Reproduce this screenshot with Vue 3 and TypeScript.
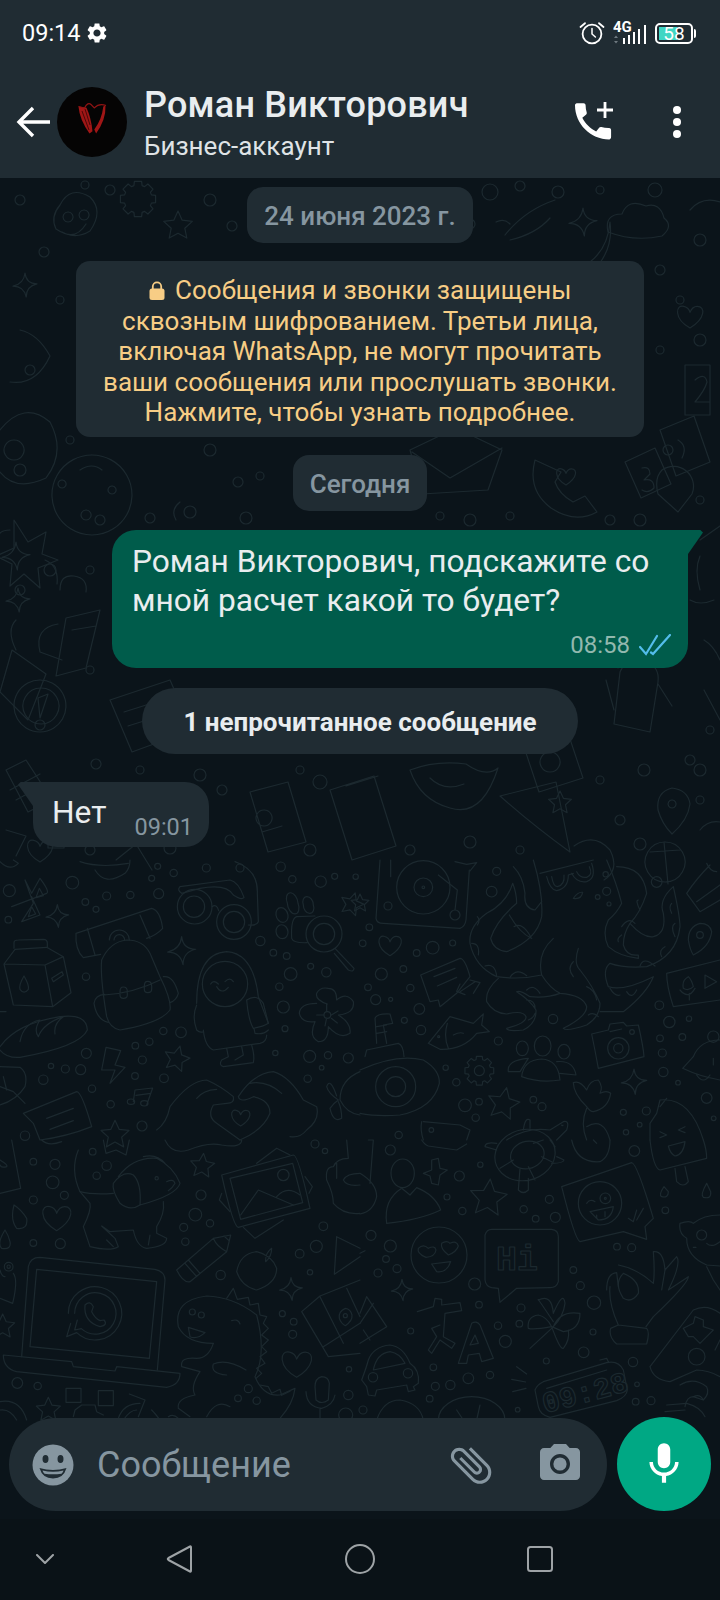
<template>
  <div class="phone">
    <header class="top">
      <div class="status">
        <span class="clock">09:14</span>
        <svg class="gear" viewBox="0 0 24 24" width="24" height="24">
          <path fill="#fff" d="M19.14 12.94c.04-.3.06-.61.06-.94 0-.32-.02-.64-.07-.94l2.03-1.58c.18-.14.23-.41.12-.61l-1.92-3.32c-.12-.22-.37-.29-.59-.22l-2.39.96c-.5-.38-1.03-.7-1.62-.94l-.36-2.54c-.04-.24-.24-.41-.48-.41h-3.84c-.24 0-.43.17-.47.41l-.36 2.54c-.59.24-1.13.57-1.62.94l-2.39-.96c-.22-.08-.47 0-.59.22L2.74 8.87c-.12.21-.08.47.12.61l2.03 1.58c-.05.3-.09.63-.09.94s.02.64.07.94l-2.03 1.58c-.18.14-.23.41-.12.61l1.92 3.32c.12.22.37.29.59.22l2.39-.96c.5.38 1.03.7 1.62.94l.36 2.54c.05.24.24.41.48.41h3.84c.24 0 .44-.17.47-.41l.36-2.54c.59-.24 1.13-.56 1.62-.94l2.39.96c.22.08.47 0 .59-.22l1.92-3.32c.12-.22.07-.47-.12-.61l-2.01-1.58zM12 15.6c-1.98 0-3.6-1.62-3.6-3.6s1.62-3.6 3.6-3.6 3.6 1.62 3.6 3.6-1.62 3.6-3.6 3.6z" />
        </svg>
        <div class="status-right">
          <svg viewBox="0 0 26 24" width="26" height="24" fill="none" stroke="#fff" stroke-width="1.8" stroke-linecap="round">
            <circle cx="13" cy="13" r="9.4" />
            <path d="M13 7.5V13l3.4 3" stroke-width="1.5" />
            <path d="M1.5 6 6 2.2M24.500 6 20 2.200" />
          </svg>
          <svg class="signal" viewBox="0 0 34 26" width="34" height="26">
            <text x="0" y="13" class="net">4G</text>
            <path d="M3 16.500l2 2.500h-4zM3 24.500l2-2.500h-4z" fill="#6f7a80" />
            <rect x="10" y="19" width="2" height="6" fill="#fff" />
            <rect x="15" y="16" width="2" height="9" fill="#fff" />
            <rect x="20" y="13" width="2" height="12" fill="#fff" />
            <rect x="25" y="10" width="2" height="15" fill="#fff" />
            <rect x="31" y="6" width="2" height="19" fill="#fff" />
          </svg>
          <div class="battery">
            <div class="battery-fill" :style="{ width: batteryLevel * 0.31 + 'px' }"></div>
            <span class="battery-num">{{ batteryLevel }}</span>
          </div>
        </div>
      </div>
      <div class="appbar">
        <svg class="back" viewBox="0 0 34 32" width="34" height="32" fill="none" stroke="#fff" stroke-width="3.400">
          <path d="M34 16H3M17 2 3 16l14 14" />
        </svg>
        <div class="avatar">
          <svg viewBox="0 0 70 70" width="70" height="70">
            <path d="M21.500 19.500q1 13 11 27l3-2.300q-1.500-14-6-23.500z" fill="#a01616" />
            <path d="M25 24l7 19M28 22l5 16" stroke="#4a0808" stroke-width="1" fill="none" />
            <path d="M21.500 19.500l6 1.500q3.500-6.500 6.500-3.500l3.300 3.300q5-5 11.700-2.300" fill="none" stroke="#8e1414" stroke-width="1.200" />
            <path d="M48.500 18.500q.6 14-9.400 28l-1.800-4q7.500-10 9-23z" fill="#a01616" />
          </svg>
        </div>
        <div class="who">
          <div class="name">Роман Викторович</div>
          <div class="kind">Бизнес-аккаунт</div>
        </div>
        <svg class="call" viewBox="0 0 40 40" width="40" height="40">
          <path fill="#fff" transform="translate(0 2) scale(.9)" d="M37.200 26.800c-2.800 0-5.400-.45-7.900-1.250-.78-.27-1.660-.07-2.260.54l-3.500 4.400c-6.300-3-12.200-8.700-15.400-15.200l4.350-3.700c.6-.62.78-1.500.54-2.280-.83-2.480-1.250-5.130-1.250-7.880 0-1.200-1-2.200-2.200-2.200H2.700C1.500-.770 0-.24 0 1.430 0 22.200 17.300 39.400 37.900 39.400c1.600 0 2.200-1.400 2.200-2.630V29c0-1.200-1-2.200-2.200-2.200z" />
          <path d="M22 8h16M30 0v16" stroke="#fff" stroke-width="2.800" />
        </svg>
        <div class="dots">
          <span></span>
          <span></span>
          <span></span>
        </div>
      </div>
    </header>

    <main class="chat">
      <svg class="wallpaper" viewBox="0 178 720 1341" width="720" height="1341" fill="none" stroke="#1c292f" stroke-linecap="round" stroke-linejoin="round">
        <g v-for="(tile, i) in tiles" :key="i" :transform="`translate(${tile.x} ${tile.y}) scale(${tile.s})`" :stroke-width="1.2 / tile.s">
          <path v-for="(d, j) in tile.paths" :key="j" :d="d" />
          <circle v-for="(c, j) in tile.dots" :key="'c' + j" :cx="c[0]" :cy="c[1]" :r="c[2]" />
          <text v-for="(t, j) in tile.words" :key="'t' + j" :x="t.x" :y="t.y" :font-size="t.size" :transform="t.rot ? `rotate(${t.rot} ${t.x} ${t.y})` : undefined" class="doodle-word">{{ t.text }}</text>
        </g>
      </svg>

      <div class="pill">24 июня 2023 г.</div>
      <div class="notice">
        <svg class="lock" viewBox="0 0 16 20" width="16" height="20">
          <path d="M3.800 9V5.500a4.200 4.200 0 0 1 8.400 0V9" fill="none" stroke="#f7cd85" stroke-width="1.800" />
          <rect x="0.500" y="7.500" width="15" height="11.500" rx="2.500" fill="#f7cd85" />
        </svg>
        Сообщения и звонки защищены сквозным шифрованием. Третьи лица, включая WhatsApp, не могут прочитать ваши сообщения или прослушать звонки. Нажмите, чтобы узнать подробнее.
      </div>
      <div class="pill pill-today">Сегодня</div>

      <div class="bubble out">
        <div class="msg">Роман Викторович, подскажите со мной расчет какой то будет?</div>
        <div class="meta">
          <span>08:58</span>
          <svg viewBox="0 0 32 22" width="32" height="22" fill="none" stroke="#53bdeb" stroke-width="2.200" stroke-linecap="round">
            <path d="M1 13l6 7L18 2M12 18.500l2 1.500L31 1" />
          </svg>
        </div>
      </div>

      <div class="unread">1 непрочитанное сообщение</div>

      <div class="bubble in">
        <span class="msg">Нет</span>
        <span class="in-time">09:01</span>
      </div>

      <div class="composer">
        <div class="field">
          <svg class="smile" viewBox="0 0 42 42" width="42" height="42">
            <circle cx="21" cy="21" r="20.500" fill="#8696a0" />
            <ellipse cx="13.500" cy="15" rx="3" ry="4" fill="#202c33" />
            <ellipse cx="28.500" cy="15" rx="3" ry="4" fill="#202c33" />
            <path d="M7.500 24q13.500 4 27 0-3 10.500-13.500 10.500T7.500 24z" fill="#202c33" />
            <path d="M10.500 26.500q10.500 2.500 21 0-.5 2-2 3.200-8.500 1.300-17 0-1.500-1.200-2-3.200z" fill="#8696a0" />
          </svg>
          <span class="placeholder">Сообщение</span>
          <svg class="clip" viewBox="0 0 24 24" width="50" height="50">
            <path fill="#8696a0" transform="rotate(-45 12 12)" d="M16.500 6v11.500c0 2.210-1.790 4-4 4s-4-1.790-4-4V5c0-1.380 1.120-2.500 2.500-2.500s2.500 1.120 2.500 2.500v10.500c0 .55-.45 1-1 1s-1-.45-1-1V6H10v9.500c0 1.380 1.120 2.500 2.500 2.500s2.500-1.120 2.500-2.500V5c0-2.210-1.790-4-4-4S7 2.790 7 5v12.500c0 3.040 2.460 5.500 5.500 5.500s5.500-2.460 5.500-5.500V6h-1.500z" />
          </svg>
          <svg class="cam" viewBox="0 0 24 24" width="48" height="48">
            <path fill="#8696a0" d="M9 2 7.170 4H4c-1.100 0-2 .9-2 2v12c0 1.100.9 2 2 2h16c1.100 0 2-.9 2-2V6c0-1.100-.9-2-2-2h-3.170L15 2H9zm3 15c-2.760 0-5-2.240-5-5s2.240-5 5-5 5 2.240 5 5-2.240 5-5 5z" />
            <circle cx="12" cy="12" r="3.300" fill="#8696a0" />
          </svg>
        </div>
        <div class="mic">
          <svg viewBox="0 0 24 24" width="50" height="50">
            <path fill="#fff" d="M12 14c1.660 0 3-1.340 3-3V5c0-1.660-1.340-3-3-3S9 3.340 9 5v6c0 1.660 1.340 3 3 3zm5.300-3c0 3-2.540 5.100-5.300 5.100S6.700 14 6.700 11H5c0 3.410 2.720 6.230 6 6.720V21h2v-3.280c3.280-.48 6-3.300 6-6.720h-1.700z" />
          </svg>
        </div>
      </div>
    </main>

    <nav class="navbar">
      <svg viewBox="0 0 18 10" width="18" height="10"><path d="M1 1l8 8 8-8" /></svg>
      <svg viewBox="0 0 26 30" width="26" height="30"><path d="M24 2.500Q25 2 25 3.500v23q0 1.500-1 1L2.500 16q-1.500-1 0-2z" /></svg>
      <svg viewBox="0 0 30 30" width="30" height="30"><circle cx="15" cy="15" r="14" /></svg>
      <svg viewBox="0 0 26 26" width="26" height="26"><rect x="1" y="1" width="24" height="24" rx="2.500" /></svg>
    </nav>
  </div>
</template>

<script setup lang="ts">
import { ref } from 'vue'

interface Word {
  x: number
  y: number
  size: number
  rot?: number
  text: string
}

interface Tile {
  x: number
  y: number
  s: number
  paths: string[]
  dots: number[][]
  words?: Word[]
}

const batteryLevel = ref(58)

const star = (cx: number, cy: number, r: number, rot = 0) => {
  let d = ''
  for (let i = 0; i < 10; i++) {
    const len = i % 2 ? r * 0.48 : r
    const a = rot + (Math.PI * i) / 5 - Math.PI / 2
    d += `${i ? 'L' : 'M'}${(cx + len * Math.cos(a)).toFixed(1)} ${(cy + len * Math.sin(a)).toFixed(1)}`
  }
  return d + 'Z'
}

const sparkle = (cx: number, cy: number, r: number) =>
  `M${cx} ${cy - r}Q${cx + r * 0.1} ${cy - r * 0.1} ${cx + r} ${cy - r * 0.1}Q${cx + r * 0.1} ${cy + r * 0.1} ${cx + r * 0.1} ${cy + r}Q${cx - r * 0.1} ${cy + r * 0.1} ${cx - r} ${cy + r * 0.1}Q${cx - r * 0.1} ${cy - r * 0.1} ${cx} ${cy - r}Z`

const heart = (cx: number, cy: number, s: number) =>
  `M${cx} ${cy + s}C${cx - s * 1.4} ${cy + s * 0.2} ${cx - s * 1.2} ${cy - s} ${cx - s * 0.5} ${cy - s * 0.8}Q${cx - s * 0.1} ${cy - s * 0.7} ${cx} ${cy - s * 0.3}Q${cx + s * 0.2} ${cy - s * 0.8} ${cx + s * 0.6} ${cy - s * 0.8}C${cx + s * 1.3} ${cy - s * 0.8} ${cx + s * 1.3} ${cy + s * 0.2} ${cx} ${cy + s}Z`

const gear = (cx: number, cy: number, r: number) => {
  let d = ''
  for (let i = 0; i < 8; i++) {
    const a = (Math.PI * i) / 4
    const pts = [
      [r * 0.78, a - 0.3],
      [r, a - 0.2],
      [r, a + 0.2],
      [r * 0.78, a + 0.3],
    ]
    for (const [len, ang] of pts) {
      d += `${d ? 'L' : 'M'}${(cx + len * Math.cos(ang)).toFixed(1)} ${(cy + len * Math.sin(ang)).toFixed(1)}`
    }
  }
  return d + 'Z'
}

// page-space doodles above y=860, only the strips round the cards really show
const topTile: Tile = {
  x: 0,
  y: 0,
  s: 1,
  paths: [
    gear(138, 199, 18),
    star(178, 226, 15),
    'M60 205q10-20 30-8 14 14 0 34-16 10-34-2-6-12 4-24zM68 212a5 5 0 1 0 .1 0M84 210a5 5 0 1 0 .1 0M62 232q14 8 24-8',
    'M505 235q20-25 50-35M510 240q26-6 40-22M496 222q8-4 14 2',
    'M608 232q-4-18 14-18 6-16 24-8 14-4 18 12 10 8-2 18-28 6-54-4z',
    sparkle(583, 222, 14),
    'M590 262q18-14 20-40 4 30-20 52',
    sparkle(25, 285, 12),
    'M20 330q18 4 30 26-14 30-40 26',
    'M0 430q24-30 50-8 16 30-4 56-30 14-46-6M14 440a10 10 0 1 0 .1 0',
    'M685 365h25v50h-25zM695 380q10-8 12 2-2 8-12 20h14',
    'M660 430l34-14 16 46-34 14zM678 440q10 6 4 18',
    heart(690, 316, 12),
    'M662 470a20 20 0 0 1 30 24l-14 18-20-18q-4-16 4-24z',
    'M92 455a40 40 0 1 1-.1 0M80 470q12-8 22 0M86 510a5 5 0 1 0 .1 0M112 486a4 4 0 1 0 .1 0M62 480a4 4 0 1 0 .1 0',
    'M410 450l46-22 46 22-14 40-66 4zM412 452l38 26 52-30',
    'M535 460q-8 30 16 48 24 16 46 4l-12-16-12 6q-14-8-18-20l6-10z',
    heart(566, 476, 9),
    'M625 462l30-14 16 36-30 14zM642 468q8-2 8 6-4 4-6 6 10-2 10 8-6 6-12 2',
    'M14 520l14 22 18-10-4 22 16 6-20 8 2 20-16-14-14 12 2-22-16-8 18-8z',
    'M10 530q-14 0-14 14M45 560q14 6 12 24',
    sparkle(16, 556, 14),
    'M66 618l34-8-14 58-30 8z M72 630l24-4',
    'M60 590q0-16 14-14 14 2 12 16M62 660l-22-8q-6-24 18-28',
    'M16 620q-10 10 0 30',
    sparkle(18, 600, 12),
    'M12 650l34 24-18 46-28-28z',
    'M40 680a26 26 0 1 1-.1 0M41 688a18 18 0 1 1-.1 0M48 694l-8 24-2-20 10-4z',
    'M6 770l20-10 26 40-24 12zM10 790l30-16M16 800l22-12',
    'M110 700l60-20 22 50-60 22zM124 712l38-12M128 726l38-12',
    'M700 556q-6 14 0 34M690 600q10 6 24 0',
    'M620 672q6-14 24-12 16 6 14 22l-8 50-36-8z M606 680l8 30M658 684l14 22M640 660l6-14M618 668l-8-12',
    'M330 790l44-14 22 70-44 14zM346 786l32-10',
    'M250 792l38-10 18 60-38 10zM264 810a8 8 0 1 0 .1 0M262 832l20-6',
    'M410 770q26-10 56-6 20 14 32 4-16 50-48 40-30-8-40-38zM430 778q14 14 34 6',
    'M500 796q34 30 70 56l-14-70z',
    star(560, 803, 12),
    'M525 750l44-14 14 42-44 14zM550 752a10 10 0 1 0 .1 0',
    'M672 788q-16 4-14 22 4 14 14 24 16-14 18-30-2-14-18-16zM672 800a4 4 0 1 0 .1 0',
    'M665 842a20 20 0 1 0 .1 0M650 852l30-2M664 842l4 42',
    'M574 846q20-14 36 4 10 20-6 30',
    heart(40, 850, 12),
    'M690 210q12-14 30-8M700 540l20-14M700 830q8-10 20-8M704 690l16 30M704 640q10 6 16 20',
    'M48 808h16v40h-16zM6 830l20 6-10 20',
    'M116 860l20-16 16 26',
    'M120 572q-6 14 6 20M176 520q-6-10 4-18',
  ],
  dots: [
    [110, 190, 5], [85, 185, 4], [210, 200, 6], [232, 226, 5], [490, 192, 8], [470, 224, 5], [520, 186, 5], [558, 192, 6], [600, 190, 4], [655, 190, 7], [700, 240, 6],
    [20, 200, 5], [44, 252, 5], [30, 370, 5], [60, 300, 4], [20, 470, 6], [70, 440, 4], [660, 270, 5], [680, 300, 4], [700, 340, 6], [660, 350, 4], [668, 450, 5], [700, 500, 4],
    [210, 450, 6], [238, 482, 5], [260, 476, 4], [246, 518, 6], [190, 512, 6], [150, 518, 5], [100, 520, 5], [470, 520, 6], [510, 516, 4], [440, 516, 4], [610, 520, 5], [640, 520, 6],
    [20, 590, 5], [50, 570, 6], [90, 570, 4], [40, 725, 5], [90, 670, 4], [96, 764, 5], [140, 770, 4], [200, 775, 6], [222, 790, 5], [300, 770, 4], [320, 782, 7], [600, 780, 4], [644, 770, 6], [690, 760, 5], [710, 730, 4], [700, 770, 6],
    [230, 840, 5], [192, 826, 4], [240, 868, 4], [310, 850, 6], [410, 850, 5], [470, 842, 6], [520, 850, 4], [620, 820, 5], [640, 844, 6], [700, 800, 4], [90, 850, 5], [120, 842, 4], [170, 848, 6],
  ],
}

const tileA: Tile = {
  x: 0,
  y: 860,
  s: 1 / 3,
  paths: [
    'M35 140L140 100Q150 95 120 55L95 100L75 60L100 130L65 185L120 165L95 110',
    'M118 85l12 22-22 6zM95 140l12 22-22 8z',
    sparkle(172, 168, 34),
    'M0 5q30 30 55 5L40 0',
    'M240 5q60 20 145 5M285 30q30 50 90 10 15-15 15-40',
    'M540 80L690 60Q715 65 732 112Q725 122 700 105Q680 70 600 85L545 100Q530 90 540 80',
    'M705 5Q775 30 772 100L775 185Q770 198 745 195',
    'M532 140a52 52 0 1 0 104 0a52 52 0 1 0-104 0M550 140a32 32 0 1 0 64 0a32 32 0 1 0-64 0',
    'M650 186a52 52 0 1 0 104 0a52 52 0 1 0-104 0M670 186a32 32 0 1 0 64 0a32 32 0 1 0-64 0M636 140q14-10 20 12',
    'M918 222a54 54 0 1 0 108 0a54 54 0 1 0-108 0M940 222a32 32 0 1 0 64 0a32 32 0 1 0-64 0M1005 265L1062 325Q1062 338 1045 330L1003 280',
    'M862 130a16 26-20 1 0 32 0a16 26-20 1 0-32 0M910 135a15 21-20 1 0 30 0a15 21-20 1 0-30 0M828 165a17 22-20 1 0 36 0a17 22-20 1 0-36 0M828 215a17 20-15 1 0 36 0a17 20-15 1 0-36 0',
    'M945 168L890 170Q872 175 875 235Q880 250 922 248',
    star(1055, 133, 36, 0.3),
    'M228 220L455 145Q480 150 488 205Q470 225 440 235M228 220Q225 270 250 293L302 283M262 205L285 285M420 165L450 235',
    'M328 240a30 30 0 0 1 60 0M342 240a16 16 0 0 1 32 0',
    'M305 300Q330 245 380 240Q430 240 450 280L480 350Q515 420 510 450Q480 490 360 510Q330 505 320 470Q300 350 305 300Z',
    'M312 405Q400 400 480 360M360 395q0-14 10-14 12 0 12 14v10q0 10-12 10-10 0-10-10zM433 378q0-14 10-14 12 0 12 14v10q0 10-12 10-10 0-10-10z',
    'M315 403Q285 405 282 430Q290 480 325 487M490 350Q520 345 535 400Q530 420 510 428',
    sparkle(545, 272, 42),
    'M12 312L45 268L140 262L190 290L213 398L158 440L40 435ZM12 312L135 315L190 290M135 315L158 440',
    'M42 265L42 248Q42 240 55 240L130 238Q142 238 142 250L142 262',
    'M72 348Q56 375 60 388Q72 405 85 388Q88 375 72 348ZM155 355L186 335L190 345L160 365Z',
    'M590 430Q590 280 680 275Q760 280 775 410L805 490M607 372a68 68 0 1 0 136 0a68 68 0 1 0-136 0',
    'M632 372Q640 358 655 372M675 365Q690 350 700 365M650 380Q665 405 685 382',
    'M740 420Q770 400 790 430L805 490Q790 500 760 505Q745 480 740 420ZM762 505L765 520Q790 525 805 510M590 435Q575 470 590 510Q600 520 610 515',
    'M610 510Q615 560 640 570L780 550Q800 545 800 525',
    'M680 565L685 590L665 600Q655 615 670 620L760 608Q765 590 755 555M725 560L730 585L705 600',
    'M982 432Q945 420 950 400Q960 380 985 385Q1010 385 1010 420Q1040 395 1060 425Q1065 460 1015 465Q1055 490 1050 520Q1020 540 985 500Q985 545 955 545Q925 530 945 485Q905 490 898 460Q900 430 950 430',
    'M972 465a10 10 0 1 0 20 0a10 10 0 1 0-20 0M950 465h20M994 465l20-12M980 432v20M975 498l4-20M994 475l18 14',
    'M0 560Q50 490 180 470Q260 460 262 510Q240 560 60 592Q20 595 0 570',
    'M60 545Q70 490 120 480Q100 510 115 530Q130 490 190 470Q160 490 165 522',
    'M318 562L362 572L345 615L375 622L330 670L345 630L305 630Z',
    star(530, 597, 40, 0.25),
    'M405 690L458 684L440 735M405 690L400 725M382 725a11 8 0 1 0 22 0a11 8 0 1 0-22 0M422 730a11 8 0 1 0 22 0a11 8 0 1 0-22 0M408 706l44-6',
    'M470 810Q500 790 510 740Q570 660 620 660Q665 680 700 710Q705 730 680 730L640 735Q620 770 650 790L720 840M590 715Q610 690 650 688',
    'M715 710Q760 640 820 635Q870 650 910 720L950 740Q960 780 920 810Q900 835 870 830M715 710Q720 730 760 710Q810 720 810 760Q790 810 720 840M845 700Q800 660 750 670',
    heart(722, 772, 26),
    'M1080 635Q1020 660 1020 720Q1040 760 1080 765M1010 708Q990 650 980 680Q985 700 1015 720Q1000 730 990 745Q1000 790 1025 775Q1025 745 1015 725',
    'M0 620L60 622Q85 640 75 680Q50 720 0 735M0 680L40 695L75 730M10 650l10 40',
    'M70 760L230 695Q245 695 275 800Q200 830 120 840L100 790ZM140 775L220 745M150 808L220 782',
    star(345, 825, 44),
    'M0 455h18',
  ],
  dots: [
    [28, 92, 18], [217, 68, 19], [256, 126, 10], [288, 148, 9], [320, 108, 12], [391, 105, 11], [476, 101, 15], [455, 55, 9], [521, 39, 11], [473, 19, 9], [619, 24, 12], [25, 179, 10],
    [842, 20, 14], [877, 58, 11], [962, 65, 17], [1004, 49, 9], [1067, 50, 8], [781, 243, 14], [820, 278, 10], [860, 288, 10], [932, 319, 9], [979, 337, 14], [872, 342, 19], [838, 380, 11],
    [850, 441, 18], [855, 506, 9], [258, 350, 11], [490, 513, 11], [543, 517, 16], [406, 557, 10], [448, 545, 11], [427, 600, 12], [259, 580, 15], [196, 627, 12], [242, 629, 15], [153, 618, 8],
    [130, 659, 14], [405, 648, 10], [492, 655, 13], [276, 686, 11], [332, 733, 11], [426, 798, 15], [826, 579, 8], [929, 589, 18], [984, 586, 11], [965, 623, 7], [1045, 594, 15], [923, 656, 11], [75, 827, 14],
  ],
}

const tileB: Tile = {
  x: 360,
  y: 860,
  s: 1 / 3,
  paths: [
    star(0, 130, 28),
    'M60 0L48 175Q50 190 70 190L300 205Q315 200 318 180L328 30',
    'M110 82a80 80 0 1 0 160 0a80 80 0 1 0-160 0M162 82a28 28 0 1 0 56 0a28 28 0 1 0-56 0M186 82a4 4 0 1 0 8 0a4 4 0 1 0-8 0',
    'M235 45L292 90L285 150M270 165a15 15 0 1 0 30 0a15 15 0 1 0-30 0M72 138a12 12 0 1 0 24 0a12 12 0 1 0-24 0M92 0V50',
    'M285 5l35 8 30-5-20 25',
    'M520 0Q550 100 545 170Q530 240 440 275Q400 270 392 235Q410 180 470 130Q470 100 458 70Q440 130 380 160Q325 200 330 250Q345 320 410 350Q480 360 545 345',
    'M460 20Q490 50 495 100Q490 145 525 150L545 125M448 165Q480 220 515 235M462 200q25-15 50 30M352 170q10 10 0 25M335 250q25 0 20 35M375 318q30-10 35 30M450 352q20-30 50-5',
    'M580 235Q530 280 545 345Q570 385 600 400Q670 405 680 440Q680 470 610 505Q620 515 680 495Q720 470 720 430Q700 380 660 330Q640 310 655 265M640 305q-20 20 0 45M680 380q25 10 30 40M685 465q15-10 30 5',
    'M415 355Q375 390 380 425Q400 460 440 462Q490 450 498 470Q500 490 440 505Q440 515 490 510Q530 490 528 450Q510 420 470 395Q480 390 510 410Q560 415 600 400M500 420q25 0 25 25M505 480q15-5 20-20M500 390q20-20 40 10',
    'M740 0Q770 70 785 130Q770 160 745 180Q725 220 745 260Q780 290 835 295L835 285Q800 290 790 255Q790 220 810 190Q850 235 880 230Q920 220 910 160Q895 120 940 80Q960 170 960 200Q950 290 860 320Q790 325 750 310Q725 330 745 380Q790 395 880 350Q860 400 790 455L720 455',
    'M770 20Q850 20 860 100Q840 160 810 190M840 150q-15-30-5-30M785 200q20-30 40-10M775 245q-5-10 10-20M935 160q-10-20 0-30M945 190q-15 10 0 40M915 260q-20 10-10 30M840 318q10-30 45 0M750 385q15 25 30 20M800 395q15 25 30 -5',
    'M540 40L700 0M560 50Q570 90 590 92Q625 85 625 45M575 50Q580 80 592 80Q615 75 612 45M635 40Q650 70 680 65Q710 55 695 10M650 35Q660 55 680 52Q700 45 688 20M625 45L640 40',
    'M640 115q14-20 28-18-4 22-28 18z',
    'M1020 190Q985 200 985 240Q990 270 1000 285Q1050 260 1055 215Q1050 190 1020 190ZM1010 225a10 10 0 1 0 20 0a10 10 0 1 0-20 0',
    heart(90, 255, 32),
    'M1050 15q-40 40-70 85l40 55 60-35M1040 10q10 25 30 25M1010 125l70-50',
    'M182 345L300 295Q315 295 330 350L290 400L240 440L235 420L210 425ZM222 350L285 325M232 378L290 352',
    'M300 395L345 365M330 360L360 368L340 400M300 372l-10 22 25 10',
    'M205 550L270 470L340 490L370 462L365 495L388 515L350 520Q310 570 240 568ZM262 490Q250 530 265 565M280 525Q300 515 310 520M233 530a3 3 0 1 0 6 0a3 3 0 1 0-6 0',
    'M0 630Q110 580 190 600Q240 630 238 670Q220 745 120 765Q50 770 0 760M47 680a60 60 0 1 0 120 0a60 60 0 1 0-120 0M77 680a30 30 0 1 0 60 0a30 30 0 1 0-60 0',
    'M15 590L20 570L115 550Q130 555 132 590M50 550L45 475Q50 460 90 462L98 490L70 495L80 550M50 500l30-5M50 520l30-5',
    gear(358, 632, 44),
    'M343 632a15 15 0 1 0 30 0a15 15 0 1 0-30 0',
    'M523 558a25 30 0 1 0 50 0a25 30 0 1 0-50 0M469 565a18 22 0 1 0 36 0a18 22 0 1 0-36 0M594 575a18 22 0 1 0 36 0a18 22 0 1 0-36 0',
    'M485 650Q490 600 545 597Q595 600 600 660Q540 670 485 650ZM445 635Q440 600 505 595L480 635ZM590 605Q640 600 648 645L600 640',
    'M695 522L745 510L750 492L790 487L800 498L835 495Q850 560 852 590L715 625Q705 570 695 522ZM743 565a32 32 0 1 0 64 0a32 32 0 1 0-64 0M761 565a14 14 0 1 0 28 0a14 14 0 1 0-28 0M750 515L785 507M809 516a7 7 0 1 0 14 0a7 7 0 1 0-14 0',
    'M920 340L1080 300M920 340Q920 380 940 440L1080 420M985 350Q965 360 970 385Q985 395 1000 380Q995 360 985 350ZM960 390Q985 420 1005 385M988 400v20M1035 345L1070 365L1035 385Z',
    'M1080 540Q1020 540 1000 590L968 625Q1020 650 1080 660M1043 530a17 17 0 1 0 34 0a17 17 0 1 0-34 0M1010 645q20 30 40 0M1060 595v20',
    sparkle(822, 665, 38),
    star(430, 732, 50, 0.2),
    'M680 740Q640 700 640 668Q660 660 680 690Q690 660 715 660Q730 680 720 700Q740 690 752 700Q745 745 700 755Q690 755 680 740M680 745Q660 790 680 840M680 800Q730 770 750 840',
    'M900 720Q990 710 1030 840M900 720L890 760L870 790L870 840M920 715L900 740M900 815l20 10-20 8M975 800l-20 10 20 8',
    'M190 785L300 795L330 810L320 840M185 785Q180 810 190 840M207 810a7 7 0 1 0 14 0a7 7 0 1 0-14 0',
    'M440 840Q500 800 570 810L610 785Q630 780 620 810L590 840M490 810Q495 770 510 780L510 805M605 795a2 2 0 1 0 4 0',
  ],
  dots: [
    [410, 34, 12], [395, 95, 16], [28, 202, 10], [8, 250, 10], [218, 263, 19], [170, 279, 10], [278, 249, 9], [130, 327, 10], [64, 342, 18], [24, 382, 10], [151, 384, 11], [47, 419, 15], [92, 418, 6],
    [178, 447, 16], [133, 481, 9], [183, 510, 14], [415, 543, 12], [579, 477, 14], [257, 623, 8], [289, 667, 11], [315, 736, 19], [357, 725, 10], [347, 773, 11], [520, 719, 10], [546, 740, 12], [116, 825, 11],
    [790, 757, 9], [859, 753, 12], [839, 794, 7], [798, 817, 8], [898, 436, 13], [928, 486, 17], [987, 476, 8], [900, 535, 10], [967, 531, 10], [907, 579, 12], [910, 636, 14], [954, 668, 7], [1040, 714, 16], [1061, 775, 7],
    [890, 66, 16], [740, 94, 12], [713, 111, 7], [747, 132, 6], [737, 43, 8],
  ],
}

const tileC: Tile = {
  x: 0,
  y: 1140,
  s: 1 / 3,
  paths: [
    'M35 0L62 145L0 160M0 60q25 15 20 20-15 5-20-5',
    'M125 0q20 20 60 5M310 0l8 40 30-10 30 15 10-45M495 0q20 45 70 30 60-25 100-15 60 10 60-15',
    'M235 30Q210 90 240 155L270 190Q275 210 250 260L270 320Q330 335 355 320L345 295L305 258L330 275L400 270Q410 320 440 325Q500 320 500 295L470 280L470 260Q495 220 490 185',
    'M355 110Q400 50 470 55Q520 80 540 130Q530 165 420 195M340 130Q370 90 400 105Q425 130 420 195Q390 215 360 190Q335 150 340 130ZM430 50Q470 40 495 70M500 125q20-10 25 5-8 15-20 22M465 115a5 5 0 1 0 10 0a5 5 0 1 0-10 0M240 155q40 10 100 5M320 300l20 20M450 285l-5 30',
    'M665 105L880 45Q895 45 930 205L715 262Q700 262 665 105ZM690 115L878 70L908 188L722 238ZM833 105a17 17 0 1 0 34 0a17 17 0 1 0-34 0',
    'M722 225L775 150L880 195M830 170Q860 135 900 165M665 160L658 180L690 215M730 262L765 295L850 240M770 70L830 25L870 45M915 110l22 30-10 20',
    star(607, 78, 38, 0.1),
    heart(170, 232, 40),
    'M42 195Q30 240 50 265Q85 270 80 235Q65 210 42 195ZM15 270Q-10 310 5 325Q35 330 30 305Q25 285 15 270Z',
    'M1040 0L1045 55Q1010 55 1000 80Q975 80 980 120Q1000 160 1000 190Q1030 225 1080 220M1030 120Q1040 100 1080 100M1030 120Q1040 140 1080 135M1010 70v45',
    'M1010 290L1080 325M1010 290L1003 403L1080 350',
    'M85 380Q90 352 120 352L465 388Q495 395 495 420L472 690M85 380L65 650M110 388L470 425L448 655L90 620Z',
    'M10 645L215 665L220 680L345 693L350 680L540 700Q540 735 500 742L50 695Q10 685 10 645Z',
    'M205 520a80 80 0 1 1 25 58L200 590L212 550M224 520a62 62 0 1 1 20 46L224 570L232 540',
    'M255 495Q270 480 280 500L275 515Q285 535 300 542L312 540Q325 555 300 560Q250 545 255 495Z',
    'M640 610Q560 610 535 560Q520 480 620 468Q700 470 770 525Q800 640 765 710Q790 770 840 765L885 745Q880 790 840 835',
    'M640 610Q625 655 590 655Q540 650 545 680L600 695Q570 740 585 765Q530 775 535 805L570 830M620 830Q650 775 690 800',
    'M680 475L700 445L712 478L745 472L750 495L775 490L780 525L800 530L790 550L805 565L785 585L805 600L785 620L800 635L780 650L795 670L770 685L785 700L768 715',
    'M780 735l25 5 10 20 25-12 5 18 25-12',
    'M565 562L615 578Q590 600 570 590ZM568 516a9 9 0 1 0 18 0a9 9 0 1 0-18 0M595 525a9 9 0 1 0 18 0a9 9 0 1 0-18 0M695 542Q715 535 720 552M738 690Q680 655 640 672Q630 700 680 705',
    'M530 390L640 295L692 285L680 335L570 425Q550 430 530 390ZM555 370L590 410M565 360L600 400M640 295Q650 320 680 335M672 288l15 14',
    'M770 335Q720 340 710 395Q725 440 770 450Q830 430 830 385Q815 345 770 335ZM797 365Q795 340 815 325Q815 350 797 365Z',
    sparkle(873, 447, 34),
    'M905 515L960 468L1080 420M905 515L985 650L1080 640M960 470L1030 610M1040 445L1080 530M970 620L1080 550M1036 505q-22 10-18 30 5 15 18 22 22-15 20-32-4-18-20-20zM1030 527a6 6 0 1 0 12 0a6 6 0 1 0-12 0',
    heart(890, 670, 42),
    'M965 710Q945 715 945 740L948 780Q965 795 985 780L988 730Q985 710 965 710ZM918 755Q920 800 965 805Q1000 795 1005 765M960 805V835',
    'M13 380a13 13 0 1 0 26 0a13 13 0 1 0-26 0M21 380a5 5 0 1 0 10 0a5 5 0 1 0-10 0M40 400Q55 420 38 490L0 475M0 390q5 20 15 20',
    star(8, 560, 38),
    star(145, 810, 38),
    'M0 785q60-10 80 55M0 810q30-5 50 30',
    'M198 745h45v42h-45zM295 752h45v45h-45zM220 830L225 810L245 795L285 795L290 815L310 825',
    'M355 835Q370 790 420 790M388 762L435 780L415 830M370 840q20-30 40-30',
    'M455 810q10 10 25 30M505 830q15-10 30 5',
  ],
  dots: [
    [278, 35, 10], [100, 65, 10], [165, 73, 15], [320, 77, 14], [290, 107, 11], [158, 127, 19], [193, 166, 12], [100, 180, 12], [603, 165, 15], [586, 224, 19], [630, 250, 11], [551, 262, 12], [556, 305, 11], [100, 309, 10], [181, 311, 15],
    [945, 12, 12], [975, 33, 8], [970, 259, 13], [949, 319, 18], [899, 341, 13], [930, 397, 8], [662, 405, 14], [847, 521, 9], [881, 545, 10], [878, 583, 12], [1047, 688, 8], [1045, 765, 14], [52, 729, 16], [113, 738, 11], [745, 746, 12], [714, 775, 10], [770, 782, 11], [1037, 825, 21],
  ],
}

const tileD: Tile = {
  x: 360,
  y: 1140,
  s: 1 / 3,
  paths: [
    'M25 0L40 0L30 130M0 100Q50 130 50 170Q40 215 0 222',
    'M185 0q10 15 20 18l85 12 30-18',
    'M93 100a35 43 0 1 0 70 0a35 43 0 1 0-70 0M80 250Q70 180 125 145L150 165L170 143Q225 165 242 210Q180 240 80 250Z',
    'M190 100L215 90L215 60L235 55L240 85L262 90L240 105L235 135L215 130L210 108Z',
    star(385, 175, 58, 0.1),
    'M405 45a90 75-15 1 0 180 0a90 75-15 1 0-180 0M452 45a50 40-15 1 0 100 0a50 40-15 1 0-100 0M420 85l40-25M505 80l20 40M545 50l30 15M480 85L475 150Q490 165 505 150L505 115M410 30L375 20Q375 5 410 10M590 50L612 60Q610 70 575 70M520 10l30 -10M570 0L585 20',
    'M635 0Q650 70 720 65Q750 50 750 0M700 0l10 10',
    'M605 140L815 68Q830 68 880 235L855 260L860 298L790 275L660 305Q645 300 605 140Z',
    'M655 190a65 65 0 1 0 130 0a65 65 0 1 0-130 0M720 175a16 16 0 1 0 32 0a16 16 0 1 0-32 0M733 175a3 3 0 1 0 6 0a3 3 0 1 0-6 0M690 215L760 200Q755 240 715 240ZM680 190Q690 175 705 185M805 235l15 10 10-35M830 240l20-35M710 225v10M735 215v15',
    'M870 0Q880 85 900 90L1040 55Q1040 30 1030 0M945 85L950 125Q970 145 985 125L975 80M925 18L975 5Q970 45 945 48Q930 40 925 18Z',
    'M912 140Q895 165 905 170Q925 175 925 155ZM1040 130Q1020 165 1030 172Q1055 178 1052 155Z',
    'M153 345a84 84 0 1 0 168 0a84 84 0 1 0-168 0M215 372L272 365Q260 400 230 395Z',
    'M198 352Q170 340 175 325Q190 310 205 325Q225 315 228 330Q225 350 198 352ZM265 345Q240 325 245 310Q260 300 270 310Q290 300 295 318Q290 335 265 345Z',
    'M375 285Q380 268 395 268L575 268Q595 270 595 290L595 425Q590 443 570 443L470 445L420 487L415 445L395 443Q378 440 375 420Z',
    sparkle(126, 450, 32),
    'M172 515L220 500L225 475L245 478L245 495L300 488L305 512L255 520L250 590L285 610L275 625L240 600L215 640L205 630L230 590L215 565L240 555',
    'M295 670L335 550Q350 540 360 555L400 655L365 665L358 640L325 645L320 670ZM330 615L355 610L345 585Z',
    'M580 545Q530 470 535 480Q575 460 580 520Q610 450 615 490Q610 530 580 560Q600 510 660 520Q660 570 610 575L575 560Q600 630 610 625Q630 600 625 570M575 560Q520 570 505 565Q500 530 535 525Q560 530 575 560ZM575 565L510 625',
    'M740 450Q740 400 770 398L775 440M775 375Q830 385 880 430Q885 400 880 335Q910 330 915 390L950 350Q965 370 925 450L985 410Q985 430 880 530L858 560',
    'M790 400Q840 420 835 460Q815 490 790 475Q760 430 790 400ZM915 390L905 450M750 440Q745 490 775 555M775 555L860 565Q870 575 860 612L770 612Q745 590 752 565Z',
    'M960 250Q990 240 1000 250Q1030 225 1080 225M960 250Q955 280 980 295Q980 350 1040 375L1080 378M1010 285a15 15 0 1 0 30 0a15 15 0 1 0-30 0M1040 310q15 15 40 -5M1000 322h8M1040 380l20 40L1080 450',
    'M870 680L1000 510Q1040 490 1080 520M870 680Q880 720 930 725L1010 690Q1045 690 1080 710',
    'M970 565L1000 550L1005 530L1030 540L1030 560L1060 570L1040 590L1020 610L1000 590L985 590ZM985 650a25 25 0 1 0 50 0a25 25 0 1 0-50 0M1065 630l15-30',
    'M960 735Q1000 710 1040 740Q1050 760 1030 780L1000 770Q980 770 975 800M1000 770Q1020 760 1030 780',
    'M525 750Q530 735 550 725L740 668Q775 660 790 690L802 750Q800 770 770 782L570 832Q540 825 535 800ZM560 745L740 690M720 660l20-5 5 10',
    'M470 680l30 22M455 718l42 8M458 755l40-10',
    'M5 720Q20 680 25 660Q40 620 90 615Q130 620 150 670Q180 690 175 730L160 740L165 750L145 755L140 735L50 750L45 768L25 765L20 740L5 720ZM40 690Q50 640 90 635Q120 640 135 670Z',
    'M25 712a14 14 0 1 0 28 0a14 14 0 1 0-28 0M130 700a14 14 0 1 0 28 0a14 14 0 1 0-28 0',
    'M0 520L20 470L80 560L0 610M0 550L40 490M10 570l20 30M0 340l15-8',
    'M920 795l60 -5q40 10 55 40M915 815l60 -5',
    'M50 840Q70 780 120 780Q180 790 190 840M235 840a100 70 0 0 1 200 0M290 810l20 30M360 795l-10 45',
  ],
  dots: [
    [91, 30, 15], [298, 108, 15], [361, 74, 8], [261, 171, 9], [307, 213, 11], [568, 178, 12], [491, 208, 11], [527, 236, 10], [586, 232, 15], [33, 286, 15], [91, 318, 18], [78, 357, 10], [111, 386, 12], [54, 399, 12],
    [344, 432, 18], [357, 494, 10], [483, 504, 12], [478, 551, 10], [414, 557, 11], [436, 604, 18], [152, 573, 9], [640, 390, 10], [661, 437, 12], [702, 488, 20], [771, 320, 10], [815, 323, 12], [699, 576, 9], [671, 637, 16], [559, 663, 9],
    [220, 682, 10], [226, 739, 12], [271, 735, 14], [325, 715, 16], [390, 705, 11], [209, 776, 10], [473, 809, 7], [819, 666, 14], [831, 733, 7], [827, 785, 10], [873, 782, 12], [823, 33, 16], [916, 211, 10], [9, 810, 12],
  ],
  words: [
    { x: 408, y: 390, size: 105, text: 'Hi' },
    { x: 555, y: 820, size: 88, rot: -15, text: '09:28' },
  ],
}

const tiles: Tile[] = [topTile, tileA, tileB, tileC, tileD]
</script>

<style scoped>
.phone {
  width: 720px;
  height: 1600px;
  display: flex;
  flex-direction: column;
  overflow: hidden;
  background: #0b141a;
  font-family: Roboto, "Noto Sans", sans-serif;
  color: #e9edef;
}

.top {
  height: 178px;
  background: #202c33;
  flex-shrink: 0;
}

.status {
  height: 66px;
  display: flex;
  align-items: center;
  padding: 0 25px 0 22px;
  color: #fff;
}

.clock {
  font-size: 23.500px;
}

.gear {
  margin-left: 4px;
}

.status-right {
  margin-left: auto;
  display: flex;
  align-items: center;
  gap: 8px;
}

.net {
  font: 700 15px Roboto, sans-serif;
  fill: #fff;
}

.signal {
  margin-top: -2px;
}

.battery {
  position: relative;
  width: 38px;
  height: 21px;
  border: 2px solid #fff;
  border-radius: 5px;
  box-sizing: border-box;
  margin-right: 2px;
}

.battery::after {
  content: "";
  position: absolute;
  right: -5px;
  top: 4px;
  width: 2px;
  height: 9px;
  background: #fff;
  border-radius: 0 2px 2px 0;
}

.battery-fill {
  position: absolute;
  left: 2px;
  top: 2px;
  bottom: 2px;
  background: #3fd6c4;
}

.battery-num {
  position: absolute;
  left: 0;
  right: 0;
  top: -2px;
  text-align: center;
  font-size: 19px;
  line-height: 21px;
  color: #fff;
}

.appbar {
  height: 112px;
  display: flex;
  align-items: center;
  padding-left: 16px;
}

.back {
  flex-shrink: 0;
}

.avatar {
  width: 70px;
  height: 70px;
  margin-left: 7px;
  border-radius: 50%;
  background: #050404;
  flex-shrink: 0;
}

.who {
  margin-left: 17px;
  width: 401px;
  margin-top: 1px;
}

.name {
  font-size: 36px;
  font-weight: 500;
  line-height: 42px;
  letter-spacing: 0.2px;
  color: #e9edef;
}

.kind {
  font-size: 26px;
  line-height: 32px;
  margin-top: 4px;
  color: #dfe3e6;
}

.call {
  margin-left: 30px;
  flex-shrink: 0;
}

.dots {
  margin-left: 58px;
  display: flex;
  flex-direction: column;
  gap: 4px;
}

.dots span {
  width: 8px;
  height: 8px;
  border-radius: 50%;
  background: #fff;
}

.chat {
  position: relative;
  flex: 1;
  display: flex;
  flex-direction: column;
  align-items: center;
  padding-top: 9px;
  overflow: hidden;
}

.wallpaper {
  position: absolute;
  left: 0;
  top: 0;
}

.doodle-word {
  font-family: "Liberation Mono", monospace;
  font-weight: 700;
}

.pill,
.notice,
.bubble,
.unread,
.composer {
  position: relative;
}

.pill {
  height: 56px;
  padding: 2px 17px 0;
  box-sizing: border-box;
  display: flex;
  align-items: center;
  border-radius: 16px;
  background: #202c33;
  color: #8696a0;
  font-size: 26px;
  font-weight: 500;
}

.pill-today {
  margin-top: 18px;
}

.notice {
  width: 568px;
  height: 176px;
  margin-top: 18px;
  padding: 14px 22px;
  box-sizing: border-box;
  border-radius: 14px;
  background: #202c33;
  color: #f7cd85;
  font-size: 26px;
  line-height: 30.500px;
  text-align: center;
}

.lock {
  vertical-align: -2px;
  margin-right: 4px;
}

.bubble {
  box-sizing: border-box;
}

.out {
  align-self: flex-start;
  width: 576px;
  height: 138px;
  margin: 19px 0 0 112px;
  padding: 13px 20px 0 20px;
  background: #005c4b;
  border-radius: 24px 0 24px 24px;
}

.out::after {
  content: "";
  position: absolute;
  left: 100%;
  top: 0;
  width: 15px;
  height: 24px;
  background: #005c4b;
  clip-path: polygon(0 0, 82% 0, 100% 10%, 0 100%);
}

.msg {
  font-size: 31.700px;
  line-height: 38.500px;
  color: #e9edef;
}

.meta {
  position: absolute;
  right: 17px;
  bottom: 9px;
  display: flex;
  align-items: center;
  gap: 9px;
  font-size: 24px;
  color: #92b8ae;
}

.unread {
  width: 436px;
  height: 66px;
  margin-top: 20px;
  padding-top: 2px;
  box-sizing: border-box;
  border-radius: 33px;
  background: #202c33;
  display: flex;
  align-items: center;
  justify-content: center;
  font-size: 26px;
  font-weight: 700;
  color: #e9edef;
}

.in {
  align-self: flex-start;
  width: 176px;
  height: 65px;
  margin: 28px 0 0 33px;
  padding: 12px 0 0 19px;
  background: #202c33;
  border-radius: 0 24px 24px 24px;
}

.in::before {
  content: "";
  position: absolute;
  right: 100%;
  top: 0;
  width: 15px;
  height: 24px;
  background: #202c33;
  clip-path: polygon(100% 0, 18% 0, 0 10%, 100% 100%);
}

.in-time {
  position: absolute;
  right: 16px;
  bottom: 6px;
  font-size: 23.500px;
  color: #8696a0;
}

.composer {
  margin-top: auto;
  align-self: stretch;
  display: flex;
  align-items: flex-end;
  gap: 10px;
  padding: 0 9px 8px;
}

.field {
  width: 598px;
  height: 93px;
  display: flex;
  align-items: center;
  padding-left: 23px;
  box-sizing: border-box;
  border-radius: 47px;
  background: #202c33;
}

.smile {
  flex-shrink: 0;
}

.placeholder {
  margin-left: 23px;
  font-size: 36px;
  color: #8696a0;
}

.clip {
  margin-left: auto;
  flex-shrink: 0;
}

.cam {
  margin: -1px 23px 0 40px;
  flex-shrink: 0;
}

.mic {
  width: 94px;
  height: 94px;
  border-radius: 50%;
  background: #00a884;
  display: flex;
  align-items: center;
  justify-content: center;
  flex-shrink: 0;
}

.navbar {
  height: 81px;
  flex-shrink: 0;
  display: flex;
  align-items: center;
  padding-left: 36px;
  background: #0a1217;
}

.navbar svg {
  fill: none;
  stroke: #9ea3a6;
  stroke-width: 2;
  stroke-linejoin: round;
  stroke-linecap: round;
  margin-top: -1px;
}

.navbar svg:nth-child(2) {
  margin-left: 112px;
}

.navbar svg:nth-child(3) {
  margin-left: 153px;
}

.navbar svg:nth-child(4) {
  margin-left: 152px;
}
</style>

<style>
body {
  background: #0b141a;
}
</style>
